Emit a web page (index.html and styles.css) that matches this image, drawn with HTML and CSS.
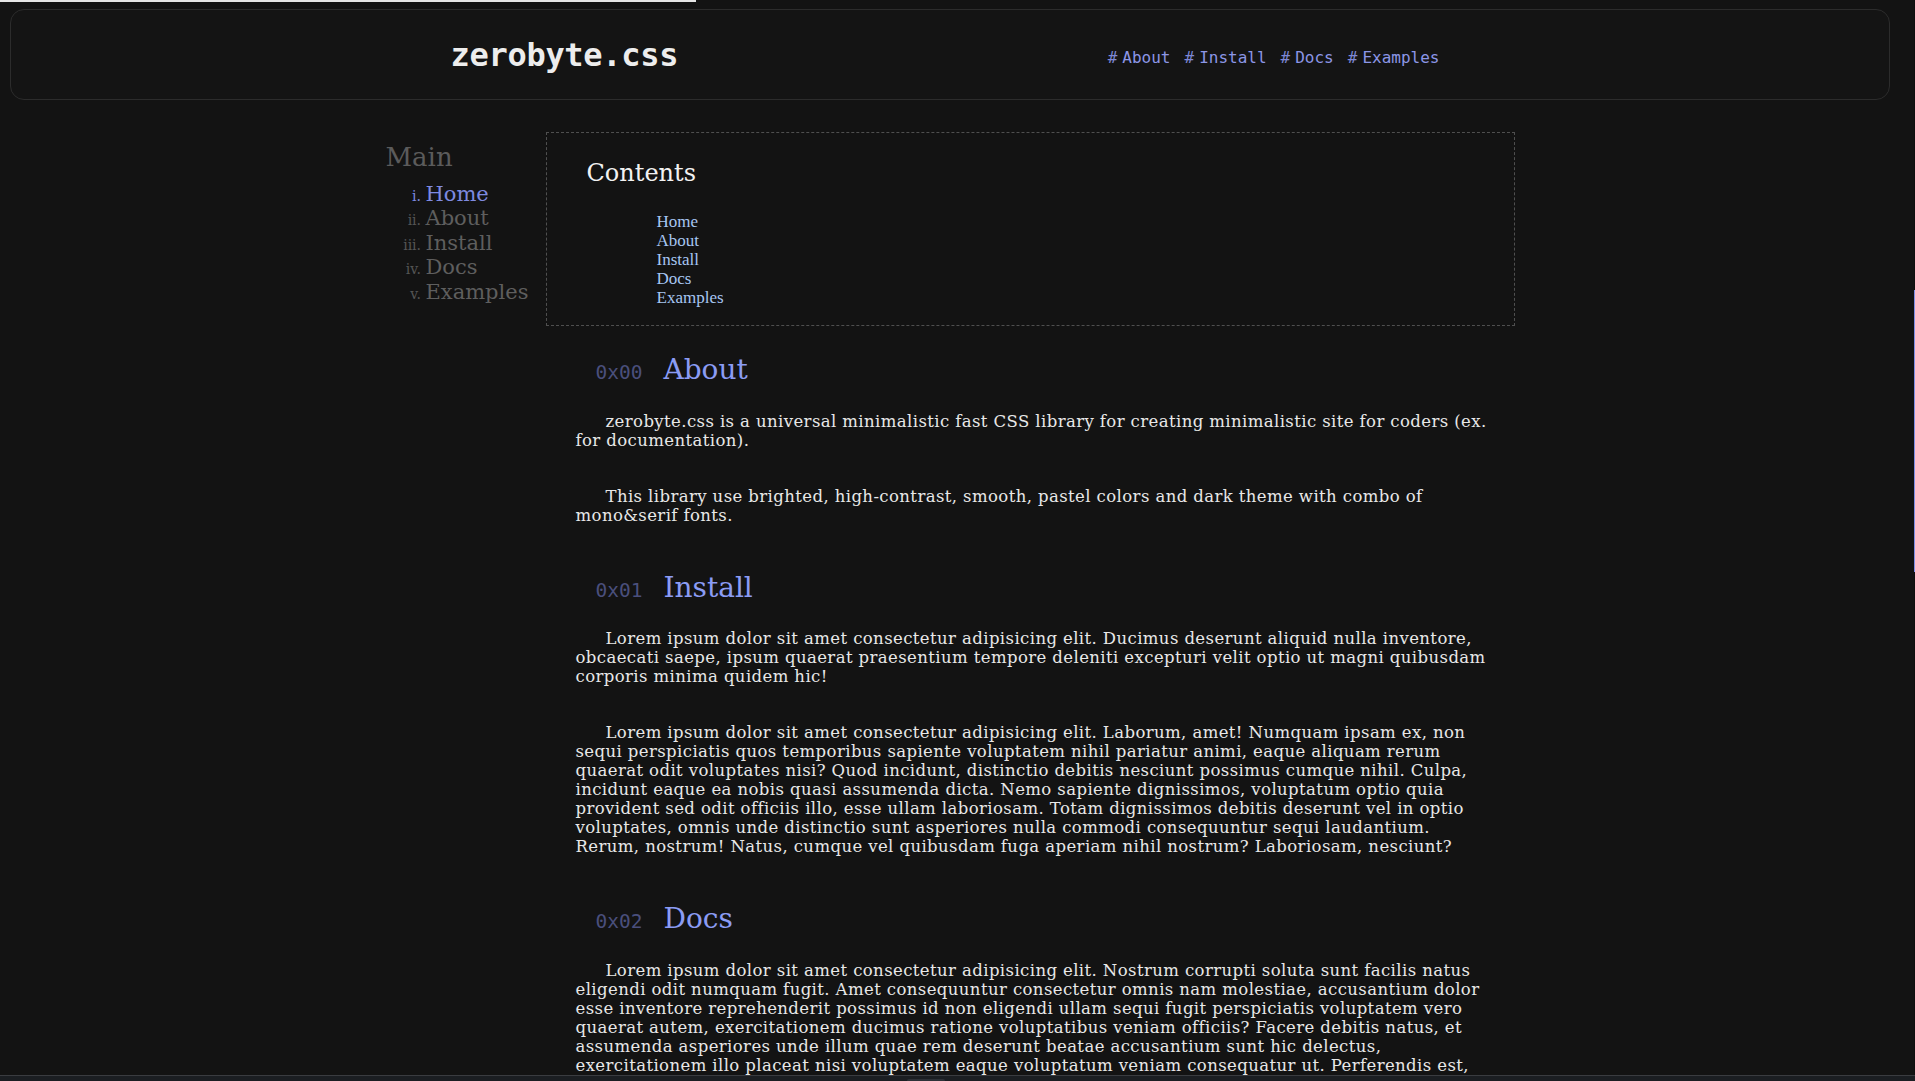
FILE: index.html
```html
<!DOCTYPE html>
<html lang="en">
<head>
<meta charset="utf-8">
<title>zerobyte.css</title>
<link rel="stylesheet" href="styles.css">
</head>
<body>
<div class="progress"></div>
<div class="page">
  <header class="site-header">
    <a class="brand" href="#">zerobyte.css</a>
    <nav class="top-nav">
      <a href="#about"><span class="hash">#</span>About</a>
      <a href="#install"><span class="hash">#</span>Install</a>
      <a href="#docs"><span class="hash">#</span>Docs</a>
      <a href="#examples"><span class="hash">#</span>Examples</a>
    </nav>
  </header>

  <div class="layout">
    <aside class="sidebar">
      <h3 class="side-title">Main</h3>
      <ol class="side-list">
        <li class="active"><a href="#">Home</a></li>
        <li><a href="#about">About</a></li>
        <li><a href="#install">Install</a></li>
        <li><a href="#docs">Docs</a></li>
        <li><a href="#examples">Examples</a></li>
      </ol>
    </aside>

    <main class="content">
      <div class="toc">
        <h2 class="toc-title">Contents</h2>
        <ul class="toc-list">
          <li><a href="#">Home</a></li>
          <li><a href="#about">About</a></li>
          <li><a href="#install">Install</a></li>
          <li><a href="#docs">Docs</a></li>
          <li><a href="#examples">Examples</a></li>
        </ul>
      </div>

      <section class="section first" id="about">
        <h2 class="sec-title" data-num="0x00">About</h2>
        <p>zerobyte.css is a universal minimalistic fast CSS library for creating minimalistic site for coders (ex. for documentation).</p>
        <p>This library use brighted, high-contrast, smooth, pastel colors and dark theme with combo of mono&amp;serif fonts.</p>
      </section>

      <section class="section" id="install">
        <h2 class="sec-title" data-num="0x01">Install</h2>
        <p>Lorem ipsum dolor sit amet consectetur adipisicing elit. Ducimus deserunt aliquid nulla inventore, obcaecati saepe, ipsum quaerat praesentium tempore deleniti excepturi velit optio ut magni quibusdam corporis minima quidem hic!</p>
        <p>Lorem ipsum dolor sit amet consectetur adipisicing elit. Laborum, amet! Numquam ipsam ex, non sequi perspiciatis quos temporibus sapiente voluptatem nihil pariatur animi, eaque aliquam rerum quaerat odit voluptates nisi? Quod incidunt, distinctio debitis nesciunt possimus cumque nihil. Culpa, incidunt eaque ea nobis quasi assumenda dicta. Nemo sapiente dignissimos, voluptatum optio quia provident sed odit officiis illo, esse ullam laboriosam. Totam dignissimos debitis deserunt vel in optio voluptates, omnis unde distinctio sunt asperiores nulla commodi consequuntur sequi laudantium. Rerum, nostrum! Natus, cumque vel quibusdam fuga aperiam nihil nostrum? Laboriosam, nesciunt?</p>
      </section>

      <section class="section" id="docs">
        <h2 class="sec-title" data-num="0x02">Docs</h2>
        <p>Lorem ipsum dolor sit amet consectetur adipisicing elit. Nostrum corrupti soluta sunt facilis natus eligendi odit numquam fugit. Amet consequuntur consectetur omnis nam molestiae, accusantium dolor esse inventore reprehenderit possimus id non eligendi ullam sequi fugit perspiciatis voluptatem vero quaerat autem, exercitationem ducimus ratione voluptatibus veniam officiis? Facere debitis natus, et assumenda asperiores unde illum quae rem deserunt beatae accusantium sunt hic delectus, exercitationem illo placeat nisi voluptatem eaque voluptatum veniam consequatur ut. Perferendis est, quibusdam magnam laudantium dolorum nemo cumque, sint quo ipsum nobis a excepturi.</p>
      </section>

      <section class="section" id="examples">
        <h2 class="sec-title" data-num="0x03">Examples</h2>
        <p>Lorem ipsum dolor sit amet consectetur adipisicing elit. Quas, voluptates.</p>
      </section>
    </main>
  </div>
</div>

<div class="scroll-track"><div class="scroll-thumb"></div></div>
<div class="bottom-bar"><span class="bottom-pill"></span></div>
</body>
</html>
```

FILE: styles.css
```css
html,
body {
  margin: 0;
  height: 100%;
  overflow: hidden;
  background: #131313;
}

body {
  font-family: "DejaVu Serif", serif;
  color: #e4e4e4;
}

a {
  text-decoration: none;
  color: inherit;
}

.page {
  padding: 9px 25px 0 10px;
}

/* header */
.site-header {
  height: 89px;
  padding-left: 10px;
  border: 1px solid #2c2c2c;
  border-radius: 14px;
  background: #141414;
  display: flex;
  justify-content: space-evenly;
  align-items: center;
}

.brand {
  font-family: "DejaVu Sans Mono", monospace;
  font-weight: bold;
  font-size: 32px;
  color: #ededed;
  letter-spacing: -0.3px;
}

.top-nav {
  display: flex;
  gap: 14px;
  margin-right: 20px;
  font-family: "DejaVu Sans Mono", monospace;
  font-size: 16px;
  padding-top: 6px;
}

.top-nav a {
  color: #8c96e6;
}

.hash {
  margin-right: 5px;
  color: #7d87d4;
}

/* layout */
.layout {
  display: flex;
  justify-content: center;
  gap: 15px;
  margin-top: 32px;
}

.sidebar {
  width: 145px;
  padding-top: 10px;
}

.side-title {
  margin: 0 0 10px;
  font-size: 26px;
  line-height: 30px;
  font-weight: normal;
  color: #5b5b5b;
}

.side-list {
  margin: 0;
  padding-left: 40px;
  list-style: lower-roman;
  font-size: 21px;
  line-height: 24.4px;
  color: #5e5e5e;
}

.side-list li::marker {
  font-size: 14px;
  color: #555555;
}

.side-list li.active,
.side-list li.active::marker {
  color: #7e8ae0;
}

.content {
  width: 969px;
  display: flex;
  flex-direction: column;
}

/* contents box */
.toc {
  border: 1px dashed #4f4f4f;
  padding: 26px 40px 18px;
}

.toc-title {
  margin: 0 0 25px;
  font-size: 24px;
  line-height: 28px;
  font-weight: normal;
  color: #f2f2f2;
}

.toc-list {
  list-style: none;
  margin: 0;
  padding-left: 70px;
  font-family: "Liberation Serif", serif;
  font-size: 17px;
  line-height: 19px;
}

.toc-list a {
  color: #a7c6f2;
}

/* sections */
.section {
  display: flex;
  flex-direction: column;
  padding: 0 18px 0 30px;
  margin-top: 46px;
}

.section.first {
  margin-top: 27px;
}

.sec-title {
  margin: 0 0 21.5px;
  padding-left: 20px;
  font-size: 28px;
  line-height: 34px;
  font-weight: normal;
  color: #8b9cf4;
}

.sec-title::before {
  content: attr(data-num);
  font-family: "DejaVu Sans Mono", monospace;
  font-size: 19.5px;
  color: #4a4f7c;
  margin-right: 21px;
}

.section p {
  margin: 0;
  font-size: 16.5px;
  letter-spacing: 0.4px;
  line-height: 19px;
  text-indent: 30px;
  color: #e8e8e8;
}

.section p + p {
  margin-top: 37px;
}

/* overlays */
.progress {
  position: fixed;
  top: 0;
  left: 0;
  width: 696px;
  height: 2px;
  background: #e6e6e6;
  z-index: 5;
}

.scroll-track {
  position: fixed;
  top: 0;
  right: 0;
  width: 1px;
  height: 100%;
  background: #0f0f0f;
}

.scroll-thumb {
  position: absolute;
  top: 290px;
  left: 0;
  width: 1px;
  height: 282px;
  background: #7f8fe6;
}

.bottom-bar {
  position: fixed;
  left: 0;
  right: 0;
  bottom: 0;
  height: 5px;
  border-top: 1px solid #3a3c40;
  background: #1b1e22;
  z-index: 5;
}

.bottom-pill {
  position: absolute;
  left: 907px;
  top: 3px;
  width: 38px;
  height: 3px;
  border-radius: 2px 2px 0 0;
  background: #2d3137;
}
```
